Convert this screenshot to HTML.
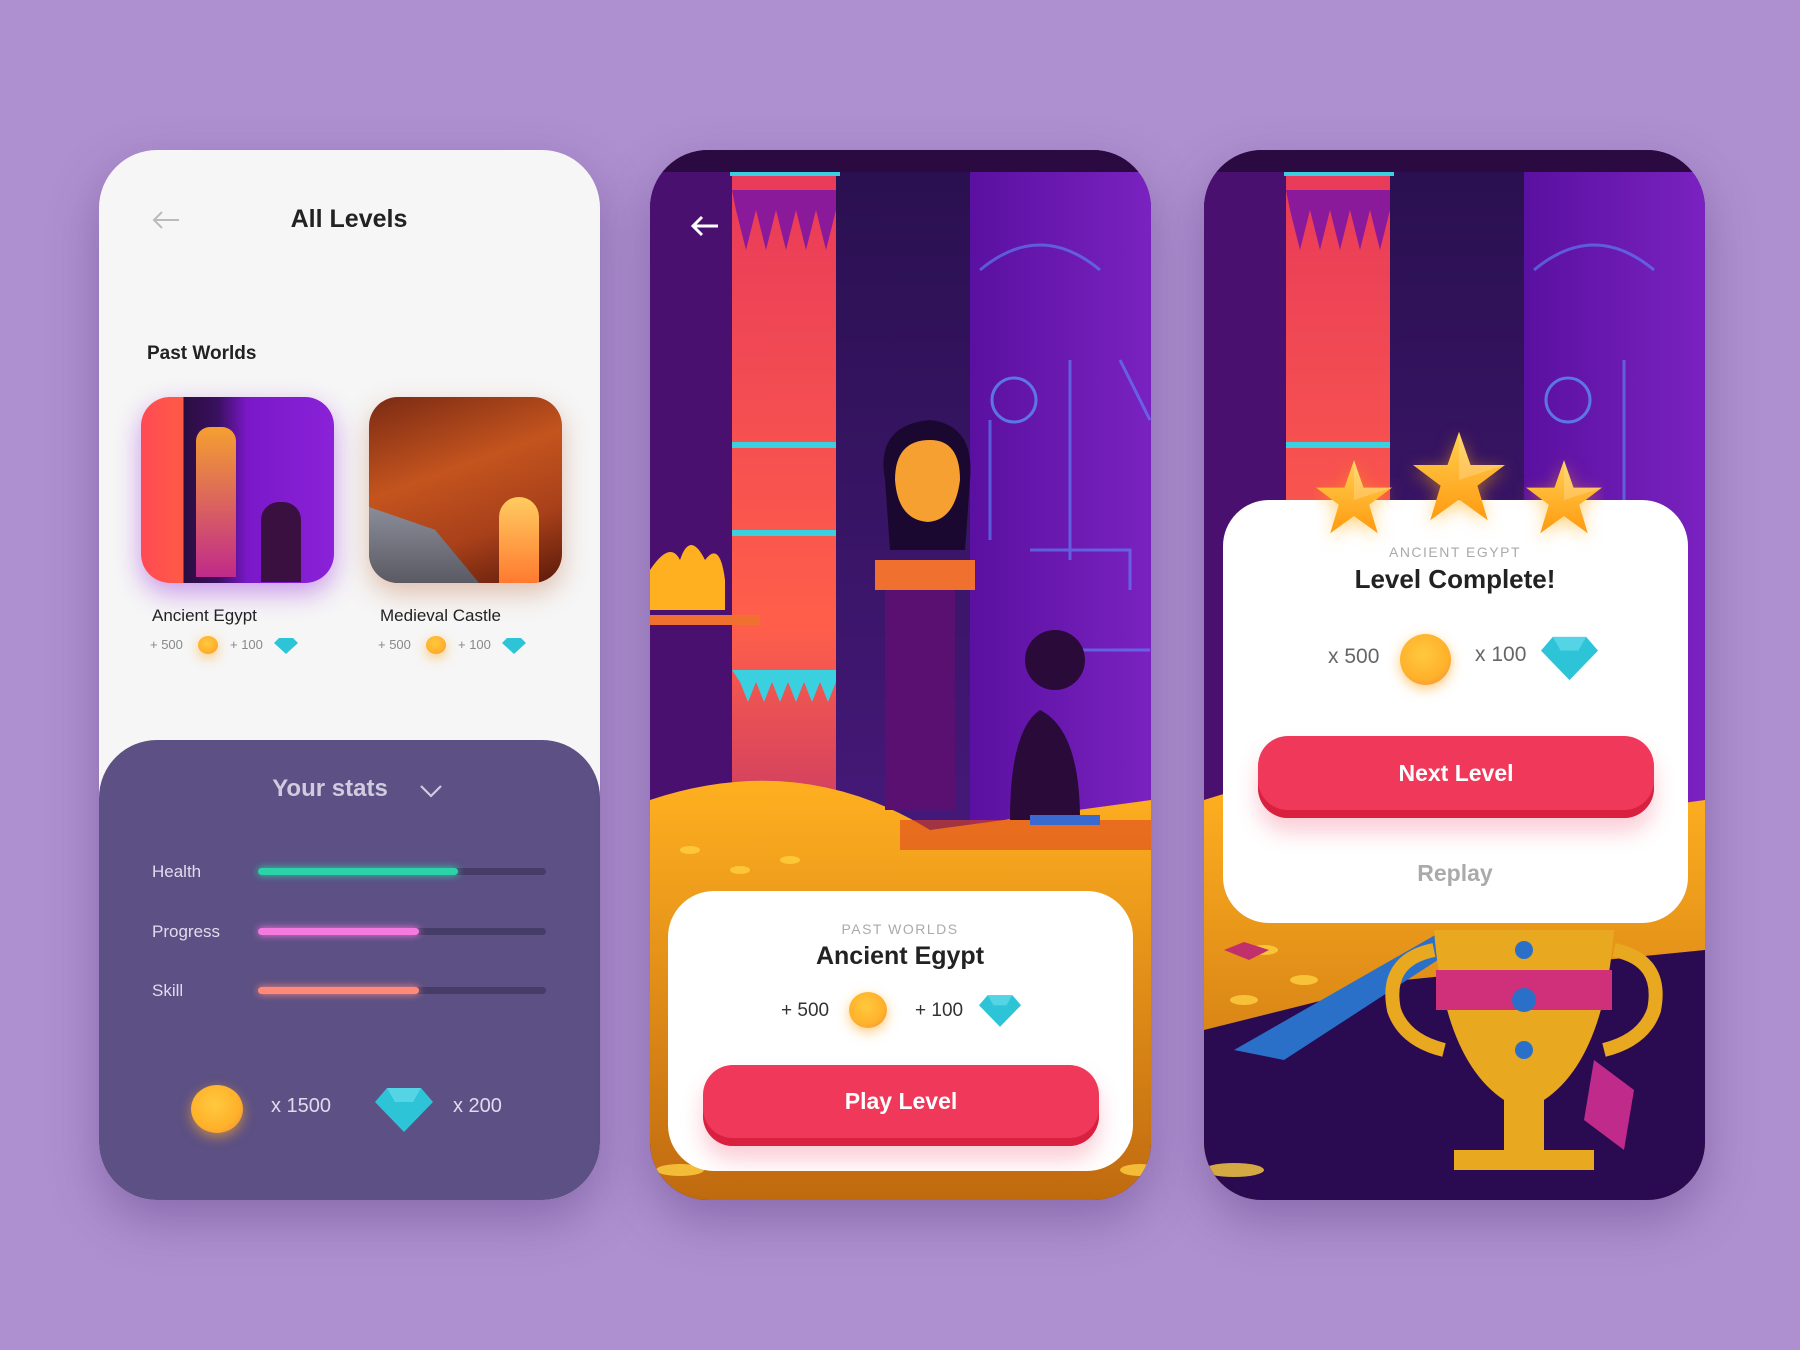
<!DOCTYPE html>
<html><head><meta charset="utf-8"><style>
*{margin:0;padding:0;box-sizing:border-box}
body{width:1800px;height:1350px;background:#ae90d0;font-family:"Liberation Sans",sans-serif;position:relative;overflow:hidden}
.p{position:absolute;top:150px;width:501px;height:1050px;border-radius:58px;overflow:hidden;box-shadow:0 20px 50px rgba(70,40,110,.35)}
.a{position:absolute;white-space:nowrap}
.c{transform:translateX(-50%)}
.coin{position:absolute;border-radius:50%;background:radial-gradient(circle at 45% 40%,#ffc93e,#ffb12a 60%,#f0834a);box-shadow:0 4px 12px rgba(255,170,40,.6)}
.bar{position:absolute;width:288px;height:7px;border-radius:4px;background:#463c68}
.bar i{display:block;height:7px;border-radius:4px}
.card{position:absolute;background:#fff;border-radius:46px}
.btn{position:absolute;background:#f0385a;border-radius:30px;box-shadow:inset 0 -8px 0 #d9213f,0 14px 22px rgba(240,56,90,.25);color:#fff;font-weight:bold;font-size:23px;text-align:center}
</style></head><body>

<svg width="0" height="0" style="position:absolute">
  <defs>
    <linearGradient id="pl" x1="0" y1="0" x2="0" y2="1"><stop offset="0" stop-color="#e83a5a"/><stop offset=".6" stop-color="#ff5f4a"/><stop offset="1" stop-color="#b02a70"/></linearGradient>
    <linearGradient id="fl" x1="0" y1="0" x2="0" y2="1"><stop offset="0" stop-color="#ffb020"/><stop offset="1" stop-color="#c06a10"/></linearGradient>
    <linearGradient id="wl" x1="0" y1="0" x2="1" y2="0"><stop offset="0" stop-color="#5a10a0"/><stop offset="1" stop-color="#7a22c0"/></linearGradient>
    <linearGradient id="mid" x1="0" y1="0" x2="0" y2="1"><stop offset="0" stop-color="#2a1050"/><stop offset="1" stop-color="#4a1a80"/></linearGradient>
    <linearGradient id="st" x1="0" y1="0" x2="0" y2="1"><stop offset="0" stop-color="#ffd050"/><stop offset="1" stop-color="#ff9a10"/></linearGradient>
  </defs>
</svg>

<!-- Panel 1 -->
<div class="p" style="left:99px;background:#f6f6f6">
  <svg class="a" style="left:52px;top:60px" width="30" height="20" viewBox="0 0 30 20"><path d="M28 10H3M11 2L3 10l8 8" stroke="#bbb" stroke-width="2" fill="none"/></svg>
  <div class="a c" style="left:250px;top:55px;font-size:25px;font-weight:bold;color:#222">All Levels</div>
  <div class="a" style="left:48px;top:193px;font-size:19px;font-weight:bold;color:#222">Past Worlds</div>
  <div class="a" style="left:42px;top:247px;width:193px;height:186px;border-radius:29px;overflow:hidden;box-shadow:0 10px 26px rgba(150,40,220,.45);background:linear-gradient(90deg,#ff4a55 0,#ff5a45 22%,#2a0d40 22%,#3a1060 40%,#7a18c8 55%,#8a22d8 100%)">
    <div class="a" style="left:55px;top:30px;width:40px;height:150px;background:linear-gradient(#f5a030,#c02a8a);border-radius:14px 14px 0 0"></div>
    <div class="a" style="left:120px;top:105px;width:40px;height:80px;background:#3a1040;border-radius:18px 18px 0 0"></div>
  </div>
  <div class="a" style="left:270px;top:247px;width:193px;height:186px;border-radius:29px;overflow:hidden;box-shadow:0 10px 26px rgba(180,90,40,.35);background:linear-gradient(160deg,#7a2a14,#c4541e 40%,#a8401a 70%,#5a1a0a)">
    <div class="a" style="left:0;top:110px;width:110px;height:76px;background:linear-gradient(#8a8d98,#5a5a64);clip-path:polygon(0 0,60% 30%,100% 100%,0 100%)"></div>
    <div class="a" style="left:130px;top:100px;width:40px;height:86px;border-radius:20px 20px 0 0;background:linear-gradient(#ffcc60,#ff7a30)"></div>
  </div>
  <div class="a" style="left:53px;top:456px;font-size:17px;color:#222">Ancient Egypt</div>
  <div class="a" style="left:281px;top:456px;font-size:17px;color:#222">Medieval Castle</div>
  <div class="a" style="left:51px;top:487px;font-size:13px;color:#888">+ 500</div>
  <div class="coin" style="left:99px;top:486px;width:20px;height:18px"></div>
  <div class="a" style="left:131px;top:487px;font-size:13px;color:#888">+ 100</div>
  <svg class="a" style="left:175px;top:488px" width="24" height="16" viewBox="0 0 24 16"><path d="M0 5L5 0h14l5 5-12 11z" fill="#2ec4d8"/></svg>
  <div class="a" style="left:279px;top:487px;font-size:13px;color:#888">+ 500</div>
  <div class="coin" style="left:327px;top:486px;width:20px;height:18px"></div>
  <div class="a" style="left:359px;top:487px;font-size:13px;color:#888">+ 100</div>
  <svg class="a" style="left:403px;top:488px" width="24" height="16" viewBox="0 0 24 16"><path d="M0 5L5 0h14l5 5-12 11z" fill="#2ec4d8"/></svg>

  <div class="a" style="left:0;top:590px;width:501px;height:460px;background:#5c5084;border-radius:58px 58px 0 0">
    <div class="a c" style="left:231px;top:35px;font-size:24px;font-weight:bold;color:#d0cce0">Your stats</div>
    <svg class="a" style="left:320px;top:44px" width="24" height="14" viewBox="0 0 24 14"><path d="M2 2l10 10L22 2" stroke="#d0cce0" stroke-width="2.2" fill="none"/></svg>
    <div class="a" style="left:53px;top:122px;font-size:17px;color:#e0dcec">Health</div>
    <div class="a" style="left:53px;top:182px;font-size:17px;color:#e0dcec">Progress</div>
    <div class="a" style="left:53px;top:241px;font-size:17px;color:#e0dcec">Skill</div>
    <div class="bar" style="left:159px;top:128px"><i style="width:200px;background:#2dd3a8;box-shadow:0 0 8px #2dd3a8"></i></div>
    <div class="bar" style="left:159px;top:188px"><i style="width:161px;background:#f57ae0;box-shadow:0 0 8px #f57ae0"></i></div>
    <div class="bar" style="left:159px;top:247px"><i style="width:161px;background:#ff8a7a;box-shadow:0 0 8px #ff8a7a"></i></div>
    <div class="coin" style="left:92px;top:345px;width:52px;height:48px"></div>
    <div class="a" style="left:172px;top:355px;font-size:20px;color:#e0dcec">x 1500</div>
    <svg class="a" style="left:276px;top:348px" width="58" height="44" viewBox="0 0 58 44"><path d="M0 14L12 0h34l12 14-29 30z" fill="#2ec4d8"/><path d="M12 0l8 14h18l8-14zM0 14h58" fill="#6ee0ec" opacity=".6"/></svg>
    <div class="a" style="left:354px;top:355px;font-size:20px;color:#e0dcec">x 200</div>
  </div>
</div>

<!-- Panel 2 -->
<div class="p" style="left:650px">
  <svg width="501" height="1050" viewBox="0 0 501 1050" style="position:absolute;left:0;top:0">
    <rect width="501" height="1050" fill="#3a0c5a"/>
    <rect x="320" y="20" width="181" height="780" fill="url(#wl)"/>
    <rect x="0" y="20" width="90" height="780" fill="#4a1070"/>
    <rect x="185" y="20" width="135" height="780" fill="url(#mid)"/>
    <rect x="82" y="20" width="104" height="760" fill="url(#pl)"/>
    <path d="M82 40h104v20l-10 40-10-40-10 40-10-40-10 40-10-40-10 40-10-40-10 40-10-40z" fill="#8a1a9a"/>
    <rect x="82" y="292" width="104" height="6" fill="#3ad0e0"/>
    <rect x="82" y="380" width="104" height="6" fill="#3ad0e0"/>
    <path d="M82 520h104v12l-8 20-8-20-8 20-8-20-8 20-8-20-8 20-8-20-8 20-8-20-8 20-8-20z" fill="#3ad0e0"/>
    <rect x="0" y="0" width="501" height="22" fill="#2a0a40"/>
    <rect x="80" y="22" width="110" height="4" fill="#3ad0e0"/>
    <circle cx="364" cy="250" r="22" fill="none" stroke="#5aa0ff" stroke-width="3" opacity=".7"/>
    <path d="M330 120q60-50 120 0M340 270v120M420 210v200M470 210l30 60M380 400h100v40M420 500h80" stroke="#5a8cff" stroke-width="3" fill="none" opacity=".6"/>
    <path d="M0 420q20-30 30-10q10-30 25 0q15-20 20 20v30H0z" fill="#ffb020"/>
    <rect x="0" y="465" width="110" height="10" fill="#f07030"/>
    <path d="M0 650Q150 600 280 680L501 650V1050H0z" fill="url(#fl)"/>
    <path d="M250 670h260v30H250z" fill="#e0461e" opacity=".6"/>
    <g fill="#ffd040" opacity=".8"><ellipse cx="40" cy="700" rx="10" ry="4"/><ellipse cx="90" cy="720" rx="10" ry="4"/><ellipse cx="140" cy="710" rx="10" ry="4"/><ellipse cx="60" cy="750" rx="10" ry="4"/><ellipse cx="120" cy="760" rx="10" ry="4"/><ellipse cx="30" cy="1020" rx="24" ry="6"/><ellipse cx="490" cy="1020" rx="20" ry="6"/></g>
    <path d="M235 330q-10-55 45-60q45 5 40 60l-5 70h-75z" fill="#1a0830"/>
    <path d="M245 330q0-40 35-40q30 0 30 40q-5 40-32 42q-30-2-33-42z" fill="#f5a030"/>
    <path d="M225 410h100v30h-100z" fill="#f07030"/>
    <rect x="235" y="440" width="70" height="220" fill="#5a1070"/>
    <path d="M390 560q-30 20-30 110h70q0-90-40-110z" fill="#2a0a38"/>
    <circle cx="405" cy="510" r="30" fill="#2a0a38"/>
    <rect x="380" y="665" width="70" height="10" fill="#3a6ad0"/>
  </svg>
  <svg class="a" style="left:40px;top:65px" width="30" height="22" viewBox="0 0 30 22"><path d="M28 11H3M12 2L3 11l9 9" stroke="#fff" stroke-width="3" fill="none"/></svg>
  <div class="card" style="left:18px;top:741px;width:465px;height:280px">
    <div class="a c" style="left:232px;top:30px;font-size:14px;letter-spacing:1.5px;color:#aaa">PAST WORLDS</div>
    <div class="a c" style="left:232px;top:51px;font-size:25px;font-weight:bold;color:#222">Ancient Egypt</div>
    <div class="a" style="left:113px;top:109px;font-size:19px;color:#333">+ 500</div>
    <div class="coin" style="left:181px;top:101px;width:38px;height:36px"></div>
    <div class="a" style="left:247px;top:109px;font-size:19px;color:#333">+ 100</div>
    <svg class="a" style="left:311px;top:104px" width="42" height="32" viewBox="0 0 58 44"><path d="M0 14L12 0h34l12 14-29 30z" fill="#2ec4d8"/><path d="M12 0l8 14h18l8-14zM0 14h58" fill="#6ee0ec" opacity=".6"/></svg>
    <div class="btn" style="left:35px;top:174px;width:396px;height:81px;line-height:72px">Play Level</div>
  </div>
</div>

<!-- Panel 3 -->
<div class="p" style="left:1204px">
  <svg width="501" height="1050" viewBox="0 0 501 1050" style="position:absolute;left:0;top:0">
    <rect width="501" height="1050" fill="#3a0c5a"/>
    <rect x="320" y="20" width="181" height="780" fill="url(#wl)"/>
    <rect x="0" y="20" width="90" height="780" fill="#4a1070"/>
    <rect x="185" y="20" width="135" height="780" fill="url(#mid)"/>
    <rect x="82" y="20" width="104" height="760" fill="url(#pl)"/>
    <path d="M82 40h104v20l-10 40-10-40-10 40-10-40-10 40-10-40-10 40-10-40-10 40-10-40z" fill="#8a1a9a"/>
    <rect x="82" y="292" width="104" height="6" fill="#3ad0e0"/>
    <rect x="0" y="0" width="501" height="22" fill="#2a0a40"/>
    <rect x="80" y="22" width="110" height="4" fill="#3ad0e0"/>
    <circle cx="364" cy="250" r="22" fill="none" stroke="#5aa0ff" stroke-width="3" opacity=".7"/>
    <path d="M330 120q60-50 120 0M420 210v200" stroke="#5a8cff" stroke-width="3" fill="none" opacity=".6"/>
    <path d="M0 650Q150 600 280 680L501 650V1050H0z" fill="url(#fl)"/>
    <path d="M0 880L200 830L501 800V1050H0z" fill="#2a0a50"/>
    <g fill="#ffd040" opacity=".8"><ellipse cx="60" cy="800" rx="14" ry="5"/><ellipse cx="100" cy="830" rx="14" ry="5"/><ellipse cx="40" cy="850" rx="14" ry="5"/><ellipse cx="30" cy="1020" rx="30" ry="7"/></g>
    <path d="M20 800l20-8 25 8-20 10z" fill="#c0306a"/>
    <path d="M30 900L240 780h40L80 910z" fill="#2a70c8"/>
    <path d="M230 780h180q-10 130-70 170v50h50v20H250v-20h50v-50q-60-40-70-170z" fill="#e8a820"/>
    <rect x="232" y="820" width="176" height="40" fill="#d0307a"/>
    <path d="M230 800q-50 10-40 60q10 30 50 40M410 800q50 10 40 60q-10 30-50 40" stroke="#e8a820" stroke-width="14" fill="none"/>
    <path d="M390 910l40 30-10 60-40-30z" fill="#c02a8a"/>
    <circle cx="320" cy="800" r="9" fill="#2a70c8"/><circle cx="320" cy="850" r="12" fill="#2a70c8"/><circle cx="320" cy="900" r="9" fill="#2a70c8"/>
  </svg>
  <div class="card" style="left:19px;top:350px;width:465px;height:423px">
    <div class="a c" style="left:232px;top:44px;font-size:14px;letter-spacing:1.5px;color:#aaa">ANCIENT EGYPT</div>
    <div class="a c" style="left:232px;top:64px;font-size:26px;font-weight:bold;color:#222">Level Complete!</div>
    <div class="a" style="left:105px;top:145px;font-size:21px;color:#666">x 500</div>
    <div class="coin" style="left:177px;top:134px;width:51px;height:51px"></div>
    <div class="a" style="left:252px;top:143px;font-size:21px;color:#666">x 100</div>
    <svg class="a" style="left:318px;top:136px" width="57" height="45" viewBox="0 0 58 44"><path d="M0 14L12 0h34l12 14-29 30z" fill="#2ec4d8"/><path d="M12 0l8 14h18l8-14zM0 14h58" fill="#6ee0ec" opacity=".6"/></svg>
    <div class="btn" style="left:35px;top:236px;width:396px;height:82px;line-height:74px">Next Level</div>
    <div class="a c" style="left:232px;top:360px;font-size:23px;font-weight:bold;color:#aaa">Replay</div>
  </div>
  <svg class="a" style="left:110px;top:270px" width="290" height="140" viewBox="0 0 290 140">
    <g fill="url(#st)" style="filter:drop-shadow(0 4px 8px rgba(255,170,0,.5))">
      <path transform="translate(40 80) scale(0.95)" d="M0-42L10-13 40-13 16 5 25 35 0 17-25 35-16 5-40-13-10-13z"/>
      <path transform="translate(145 60) scale(1.15)" d="M0-42L10-13 40-13 16 5 25 35 0 17-25 35-16 5-40-13-10-13z"/>
      <path transform="translate(250 80) scale(0.95)" d="M0-42L10-13 40-13 16 5 25 35 0 17-25 35-16 5-40-13-10-13z"/>
    </g>
    <g fill="#fff" opacity=".2">
      <path transform="translate(40 80) scale(0.95)" d="M0-42L10-13 40-13 0 0z"/>
      <path transform="translate(145 60) scale(1.15)" d="M0-42L10-13 40-13 0 0z"/>
      <path transform="translate(250 80) scale(0.95)" d="M0-42L10-13 40-13 0 0z"/>
    </g>
  </svg>
</div>
</body></html>
